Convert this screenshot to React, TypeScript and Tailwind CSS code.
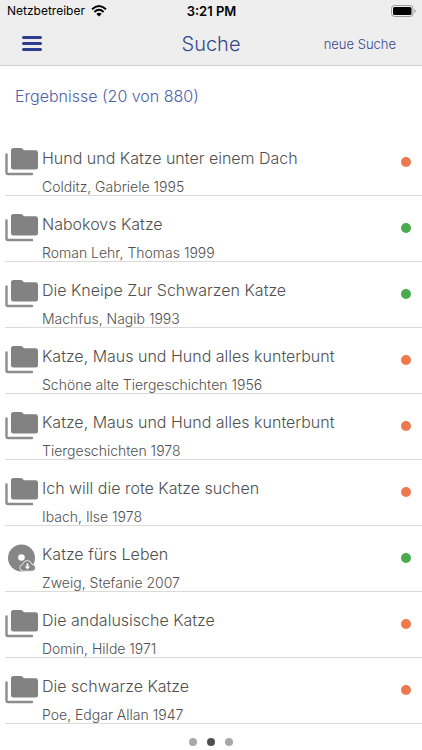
type Kind = "folder" | "disc";

interface Result {
  title: string;
  detail: string;
  kind: Kind;
  available: boolean;
}

const results: Result[] = [
  { title: "Hund und Katze unter einem Dach", detail: "Colditz, Gabriele 1995", kind: "folder", available: false },
  { title: "Nabokovs Katze", detail: "Roman Lehr, Thomas 1999", kind: "folder", available: true },
  { title: "Die Kneipe Zur Schwarzen Katze", detail: "Machfus, Nagib 1993", kind: "folder", available: true },
  { title: "Katze, Maus und Hund alles kunterbunt", detail: "Schöne alte Tiergeschichten 1956", kind: "folder", available: false },
  { title: "Katze, Maus und Hund alles kunterbunt", detail: "Tiergeschichten 1978", kind: "folder", available: false },
  { title: "Ich will die rote Katze suchen", detail: "Ibach, Ilse 1978", kind: "folder", available: false },
  { title: "Katze fürs Leben", detail: "Zweig, Stefanie 2007", kind: "disc", available: true },
  { title: "Die andalusische Katze", detail: "Domin, Hilde 1971", kind: "folder", available: false },
  { title: "Die schwarze Katze", detail: "Poe, Edgar Allan 1947", kind: "folder", available: false },
];

function FolderIcon() {
  return (
    <svg viewBox="0 0 34 28" className="h-7 w-[34px]" aria-hidden="true">
      <path d="M1.500 6.500V24.500Q1.500 26 3 26H27" fill="none" stroke="#8c8c8c" strokeWidth="2.400" strokeLinecap="round" />
      <path d="M8.500 0H15.500Q17 0 17.800 1L19 2.200H30.500Q33 2.200 33 4.700V19Q33 21.500 30.500 21.500H8.500Q6 21.500 6 19V2.500Q6 0 8.500 0Z" fill="#828282" />
    </svg>
  );
}

function DiscIcon() {
  return (
    <svg viewBox="0 0 34 28" className="h-7 w-[34px]" aria-hidden="true">
      <circle cx="16.500" cy="14" r="13.500" fill="#868686" />
      <circle cx="16.500" cy="13.500" r="3.300" fill="#fff" />
      <path
        d="M18.500 27.200Q14.800 26.800 14.800 23.700Q14.900 20.900 17.600 20.400Q18.700 16.500 22.300 16.500Q26 16.600 26.900 20.300Q30.500 20.600 30.500 23.900Q30.300 27.200 27 27.200Z"
        fill="#868686"
        stroke="#fff"
        strokeWidth="0.800"
      />
      <path d="M21.600 19.500h1.800v3h1.700L22.500 25.500L19.900 22.500h1.700Z" fill="#fff" />
    </svg>
  );
}

function StatusBar() {
  return (
    <div className="grid h-[22px] grid-cols-3 items-center pr-1.5 pl-[7px] text-black">
      <div className="flex items-center gap-1.5 text-xs">
        <span>Netzbetreiber</span>
        <svg viewBox="0 0 16 12" className="h-3 w-4" aria-hidden="true">
          <path d="M1 4.300Q8-2.200 15 4.300M3.400 6.900Q8 2.700 12.600 6.900" fill="none" stroke="#000" strokeWidth="2" />
          <path d="M5.400 8.900Q8 6.700 10.600 8.900L8 11.600Z" fill="#000" />
        </svg>
      </div>
      <span className="text-center text-[13px] leading-4 font-semibold">3:21 PM</span>
      <svg viewBox="0 0 25 12" className="h-3 w-[25px] justify-self-end" aria-hidden="true">
        <rect x="0.500" y="0.500" width="21.500" height="11" rx="3" fill="none" stroke="#9b9b9b" />
        <rect x="2" y="2" width="18.500" height="8" rx="1.500" fill="#000" />
        <path d="M23.500 4Q24.800 4.800 24.800 6T23.500 8Z" fill="#9b9b9b" />
      </svg>
    </div>
  );
}

function ResultRow({ title, detail, kind, available }: Result) {
  return (
    <li className="ml-[5px] flex h-[66px] border-b border-[#dadada]">
      <div className="shrink-0 pt-[18px]">{kind === "folder" ? <FolderIcon /> : <DiscIcon />}</div>
      <div className="min-w-0 flex-1 pl-[3px] pt-4 text-[#505050]">
        <h2 className="truncate text-base leading-6 font-light">{title}</h2>
        <p className="mt-[7px] truncate text-sm leading-5 font-light">{detail}</p>
      </div>
      <span
        role="img"
        aria-label={available ? "verfügbar" : "entliehen"}
        className={`mt-[27px] mr-[11px] size-2.5 shrink-0 rounded-full ${available ? "bg-[#4aab4e]" : "bg-[#ee794f]"}`}
      />
    </li>
  );
}

export default function App() {
  return (
    <div className="min-h-screen bg-white font-['Inter','Liberation_Sans',sans-serif]">
      <header className="border-b border-[#d2d2d2] bg-[#eee]">
        <StatusBar />
        <div className="grid h-[43px] grid-cols-3 items-center px-[22px] text-[#36478f]">
          <button type="button" aria-label="Menü" className="flex w-5 flex-col gap-[3px]">
            <span className="h-[3px] rounded-full bg-[#2b3f8c]" />
            <span className="h-[3px] rounded-full bg-[#2b3f8c]" />
            <span className="h-[3px] rounded-full bg-[#2b3f8c]" />
          </button>
          <h1 className="text-center text-xl leading-6 font-light">Suche</h1>
          <a href="#suche" className="mr-1 justify-self-end text-[13px] leading-5 font-light whitespace-nowrap">
            neue Suche
          </a>
        </div>
      </header>
      <main>
        <p className="px-[15px] pt-[18px] pb-[22px] text-base leading-6 font-light text-[#4f5fa8]">Ergebnisse (20 von 880)</p>
        <ul>
          {results.map((result) => (
            <ResultRow key={result.detail} {...result} />
          ))}
        </ul>
      </main>
      <nav aria-label="Seiten" className="flex justify-center gap-2.5 pt-3.5 pb-1">
        <button type="button" aria-label="Seite 1" className="size-2 rounded-full bg-[#a8a8a8]" />
        <button type="button" aria-label="Seite 2" aria-current="page" className="size-2 rounded-full bg-[#4f4f4f]" />
        <button type="button" aria-label="Seite 3" className="size-2 rounded-full bg-[#a8a8a8]" />
      </nav>
    </div>
  );
}
